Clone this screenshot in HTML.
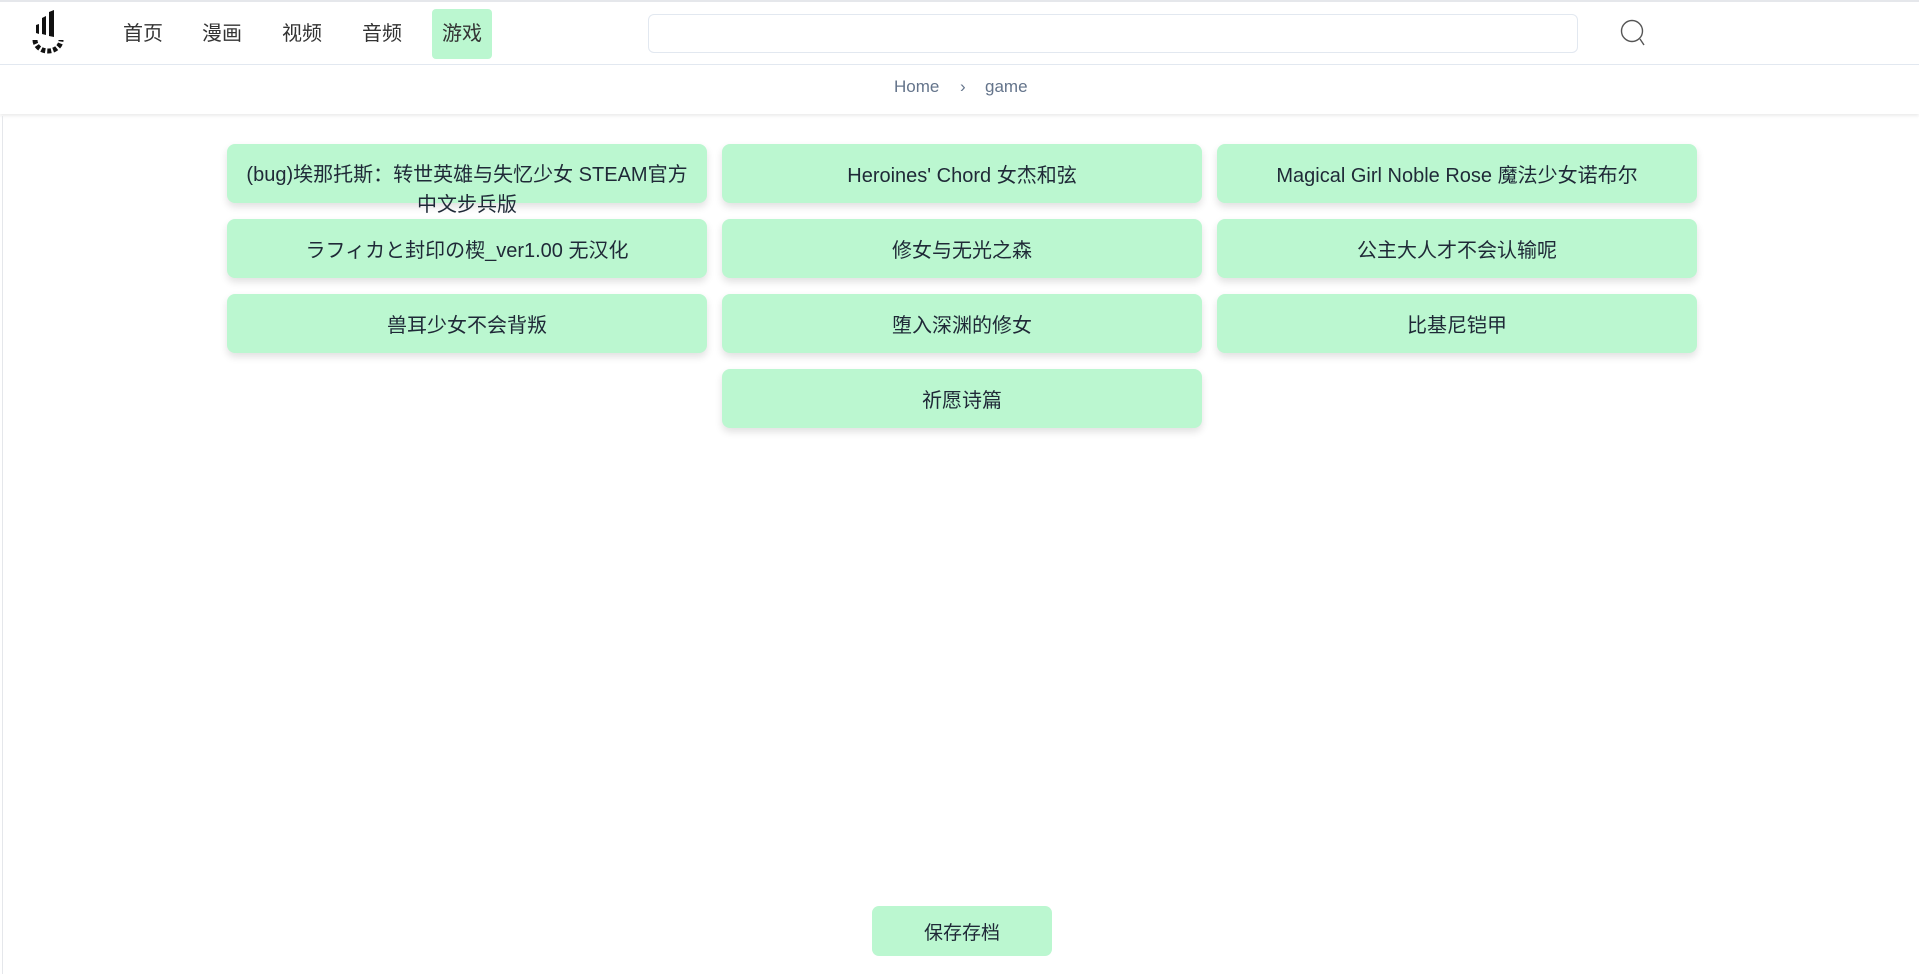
<!DOCTYPE html>
<html><head><meta charset="utf-8"><style>
*{box-sizing:border-box;margin:0;padding:0}
body{width:1919px;height:974px;background:#fff;font-family:"Liberation Sans","Noto Sans CJK SC",sans-serif;color:#1f2937;position:relative;overflow:hidden}
.top{position:absolute;left:0;top:0;width:1919px;height:65px;border-top:2px solid #e5e7eb;border-bottom:1px solid #e2e8f0;background:#fff}
.nav{position:absolute;top:21px;font-size:20px;line-height:22px;color:#333}
.active{position:absolute;left:432px;top:7px;width:60px;height:50px;background:#bbf7d0;border-radius:4px}
.search{position:absolute;left:648px;top:12px;width:930px;height:39px;border:1px solid #e2e8f0;border-radius:6px}
.bc{position:absolute;left:0;top:65px;width:1919px;height:49px;box-shadow:0 2px 3px rgba(0,0,0,.08);background:#fff}
.bc span{position:absolute;top:12px;font-size:17px;color:#64748b}
.lb{position:absolute;left:2px;top:116px;width:1px;height:858px;background:#e5e7eb}
.card{position:absolute;width:480px;height:59px;background:#bbf7d0;border-radius:8px;box-shadow:0 4px 8px rgba(0,0,0,.12);display:flex;align-items:center;justify-content:center;font-size:20px;text-align:center;color:#1f2937}
.save{position:absolute;left:872px;top:906px;width:180px;height:50px;background:#bbf7d0;border-radius:7px;display:flex;align-items:center;justify-content:center;font-size:19px}
</style></head><body>
<div class="top">
<svg style="position:absolute;left:30px;top:8px" width="36" height="46" viewBox="0 0 36 46">
<polygon points="12,8 16,6 16,25 12,24" fill="#111"/>
<polygon points="6,15 9,14 9,24 6,23" fill="#111"/>
<polygon points="19,2 24,0 24,27 19,26" fill="#111"/>
<path d="M5 30 A13 11 0 0 0 31 30" stroke="#111" stroke-width="5" fill="none" stroke-dasharray="4 2"/>
</svg>
<div class="active"></div>
<div class="nav" style="left:123px">首页</div>
<div class="nav" style="left:202px">漫画</div>
<div class="nav" style="left:282px">视频</div>
<div class="nav" style="left:362px">音频</div>
<div class="nav" style="left:442px">游戏</div>
<div class="search"></div>
<svg style="position:absolute;left:1619px;top:17px" width="30" height="30" viewBox="0 0 30 30"><circle cx="13" cy="12" r="10.5" stroke="#555" stroke-width="1.4" fill="none"/><line x1="21" y1="20" x2="25" y2="26" stroke="#555" stroke-width="1.4"/></svg>
</div>
<div class="bc"><span style="left:894px">Home</span><span style="left:960px">›</span><span style="left:985px">game</span></div>
<div class="lb"></div>
<div class="card" style="left:227px;top:144px;align-items:flex-start;padding-top:16px;line-height:30px">(bug)埃那托斯：转世英雄与失忆少女 STEAM官方<br>中文步兵版</div>
<div class="card" style="left:722px;top:144px">Heroines' Chord 女杰和弦</div>
<div class="card" style="left:1217px;top:144px">Magical Girl Noble Rose 魔法少女诺布尔</div>
<div class="card" style="left:227px;top:219px">ラフィカと封印の楔_ver1.00 无汉化</div>
<div class="card" style="left:722px;top:219px">修女与无光之森</div>
<div class="card" style="left:1217px;top:219px">公主大人才不会认输呢</div>
<div class="card" style="left:227px;top:294px">兽耳少女不会背叛</div>
<div class="card" style="left:722px;top:294px">堕入深渊的修女</div>
<div class="card" style="left:1217px;top:294px">比基尼铠甲</div>
<div class="card" style="left:722px;top:369px">祈愿诗篇</div>
<div class="save">保存存档</div>
</body></html>
